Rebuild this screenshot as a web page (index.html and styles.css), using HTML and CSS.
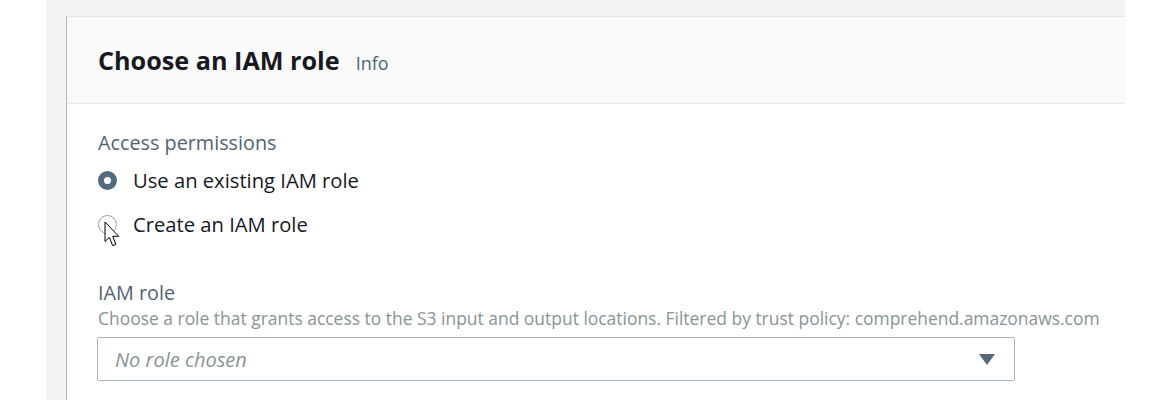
FILE: index.html
```html
<!DOCTYPE html>
<html lang="en">
<head>
<meta charset="utf-8">
<title>Choose an IAM role</title>
<link rel="stylesheet" href="styles.css">
</head>
<body>
<div class="page">
  <div class="gutter"></div>
  <div class="canvas">
    <section class="card">
      <header class="card-header">
        <h2 class="title">Choose an IAM role</h2>
        <a class="info" href="#">Info</a>
      </header>
      <div class="card-body">
        <div class="field-label">Access permissions</div>
        <div class="radios">
          <label class="radio">
            <span class="dot checked"></span>
            <span class="radio-text">Use an existing IAM role</span>
          </label>
          <label class="radio">
            <span class="dot"></span>
            <span class="radio-text">Create an IAM role</span>
            <svg class="cursor" width="19" height="27" viewBox="0 0 19 27">
              <path d="M1 1 L1 20.5 L5.4 16.4 L8.6 24.6 L11.8 23.3 L8.7 15.3 L14.7 15.3 Z" fill="#fff" stroke="#000" stroke-width="1" stroke-linejoin="round"/>
            </svg>
          </label>
        </div>
        <div class="field">
          <div class="field-label">IAM role</div>
          <div class="field-desc">Choose a role that grants access to the S3 input and output locations. Filtered by trust policy: comprehend.amazonaws.com</div>
          <div class="select">
            <span class="placeholder">No role chosen</span>
            <svg class="caret" width="16" height="11" viewBox="0 0 16 11"><path d="M0 0 H16 L8 11 Z" fill="#546b7d"/></svg>
          </div>
        </div>
      </div>
    </section>
  </div>
  <div class="gutter-right"></div>
</div>
</body>
</html>
```
FILE: styles.css
```css
* { box-sizing: border-box; }
html, body { margin: 0; padding: 0; background: #fff; }
body {
  font-family: "Open Sans", "Liberation Sans", sans-serif;
  color: #16191f;
  width: 1171px;
  height: 400px;
  overflow: hidden;
}
.page { display: flex; height: 400px; }
.gutter { width: 46px; flex: none; background: #fff; }
.gutter-right { flex: 1; background: #fff; }
.canvas {
  width: 1079px;
  flex: none;
  background: #f2f3f3;
  padding: 16px 0 0 20px;
}
.card {
  background: #fff;
  border-left: 1px solid #aab7b8;
  border-top: 1px solid #e4e7e7;
  height: 384px;
}
.card-header {
  display: flex;
  align-items: baseline;
  gap: 16px;
  height: 87px;
  padding: 27px 31px 0;
  background: #fafafa;
  border-bottom: 1px solid #e6eaea;
}
.title {
  margin: 0;
  font-size: 25.2px;
  font-weight: 700;
  line-height: 32px;
  color: #16191f;
}
.info {
  font-size: 18px;
  color: #44687d;
  text-decoration: none;
}
.card-body { padding: 27px 31px 0; }
.field-label {
  font-size: 19.8px;
  line-height: 24px;
  color: #4f6475;
}
.radios {
  display: flex;
  flex-direction: column;
  gap: 20px;
  margin-top: 13px;
}
.radio {
  position: relative;
  display: flex;
  align-items: center;
  gap: 16px;
  height: 24px;
  font-size: 20.2px;
  color: #16191f;
}
.dot {
  width: 19px;
  height: 19px;
  border-radius: 50%;
  border: 1.5px solid #95a1a2;
  background: #fff;
  flex: none;
}
.dot.checked {
  border: 6.5px solid #546b7d;
  background: #fff;
}
.cursor {
  position: absolute;
  left: 6px;
  top: 9px;
}
.field { margin-top: 45px; }
.field-desc {
  margin-top: 2px;
  font-size: 17.45px;
  line-height: 22px;
  color: #879596;
  white-space: nowrap;
}
.select {
  margin-top: 8px;
  width: 918px;
  height: 44px;
  margin-left: -1px;
  border: 1px solid #aab7b8;
  border-radius: 2px;
  display: flex;
  align-items: center;
  justify-content: space-between;
  padding: 0 19px 0 17px;
}
.placeholder {
  font-size: 20px;
  font-style: italic;
  color: #879596;
}
.caret { display: block; }
```
